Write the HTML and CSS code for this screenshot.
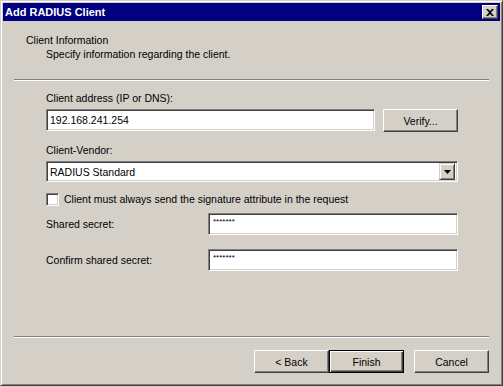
FILE: index.html
```html
<!DOCTYPE html>
<html lang="en">
  <head>
    <meta charset="UTF-8" />
    <title>Add RADIUS Client</title>
    <link rel="stylesheet" href="styles.css">
  </head>
  <body>
    <div class="window">
      <div class="titlebar">
        <span class="titlebar__text">Add RADIUS Client</span>
        <span class="titlebar__close">
          <svg width="8" height="7" viewBox="0 0 8 7">
            <path d="M0 0h2l2 2 2-2h2L5 3.5 8 7H6L4 5 2 7H0l3-3.5z" fill="#000"/>
          </svg>
        </span>
      </div>

      <div class="header">
        <div class="header__title">Client Information</div>
        <div class="header__sub">Specify information regarding the client.</div>
      </div>
      <div class="rule"></div>

      <div class="form">
        <div class="form__label">Client address (IP or DNS):</div>
        <div class="form__row">
          <div class="textbox textbox--grow">192.168.241.254</div>
          <div class="btn">Verify...</div>
        </div>

        <div class="form__label form__label--gap">Client-Vendor:</div>
        <div class="combo">
          <span class="combo__value">RADIUS Standard</span>
          <span class="combo__arrow">
            <svg width="7" height="4" viewBox="0 0 7 4"><path d="M0 0h7L3.5 4z" fill="#000"/></svg>
          </span>
        </div>

        <div class="check">
          <span class="check__box"></span>
          <span>Client must always send the signature attribute in the request</span>
        </div>

        <div class="secret">
          <span class="secret__label">Shared secret:</span>
          <div class="textbox textbox--secret">*******</div>
        </div>
        <div class="secret secret--second">
          <span class="secret__label">Confirm shared secret:</span>
          <div class="textbox textbox--secret">*******</div>
        </div>
      </div>

      <div class="rule"></div>
      <div class="buttons">
        <div class="btn">&lt; Back</div>
        <div class="btn btn--default">Finish</div>
        <div class="btn btn--cancel">Cancel</div>
      </div>
    </div>
  </body>
</html>
```

FILE: styles.css
```css
* {
  box-sizing: border-box;
}

body {
  margin: 0;
  background: #d4d0c8;
  font-family: 'Liberation Sans', Arial, sans-serif;
  font-size: 10.5px;
  line-height: 14px;
  color: #000;
}

.window {
  width: 503px;
  height: 386px;
  display: flex;
  flex-direction: column;
  padding: 2px;
  background: #d4d0c8;
  border: 1px solid;
  border-color: #d4d0c8 #404040 #404040 #d4d0c8;
  box-shadow: inset 1px 1px #fff, inset -1px -1px #808080;
}

.titlebar {
  height: 18px;
  display: flex;
  align-items: center;
  justify-content: space-between;
  padding: 0 2px 0 2px;
  background: #000080;
  color: #fff;
}

.titlebar__text {
  font-size: 11px;
  font-weight: bold;
}

.titlebar__close {
  width: 16px;
  height: 14px;
  display: flex;
  align-items: center;
  justify-content: center;
  background: #d4d0c8;
  border: 1px solid;
  border-color: #fff #404040 #404040 #fff;
  box-shadow: inset -1px -1px #808080;
}

.header {
  padding: 12px 0 0 23px;
}

.header__sub {
  padding-left: 20px;
}

.rule {
  height: 2px;
  margin: 18px 11px 0;
  border-top: 1px solid #808080;
  border-bottom: 1px solid #fff;
}

.form {
  flex: 1;
  padding: 10px 42px 0 43px;
}

.form__row {
  display: flex;
  gap: 8px;
  margin-top: 4px;
  align-items: flex-start;
}

.form__label--gap {
  margin-top: 11px;
}

.textbox {
  height: 22px;
  padding: 3px 3px 0;
  background: #fff;
  border: 1px solid;
  border-color: #808080 #fff #fff #808080;
  box-shadow: inset 1px 1px #404040, inset -1px -1px #d4d0c8;
}

.textbox--grow {
  flex: 1;
}

.textbox--secret {
  width: 250px;
  padding: 4px 4px 0;
  font-size: 8px;
  line-height: 8px;
}

.btn {
  width: 75px;
  height: 23px;
  display: flex;
  align-items: center;
  justify-content: center;
  background: #d4d0c8;
  border: 1px solid;
  border-color: #fff #404040 #404040 #fff;
  box-shadow: inset -1px -1px #808080;
}

.btn--default {
  border-color: #000;
  box-shadow: inset 1px 1px #fff, inset -1px -1px #404040, inset -2px -2px #808080;
}

.btn--cancel {
  margin-left: 10px;
}

.combo {
  height: 21px;
  margin-top: 4px;
  display: flex;
  align-items: center;
  justify-content: space-between;
  padding: 0 2px 0 3px;
  background: #fff;
  border: 1px solid;
  border-color: #808080 #fff #fff #808080;
  box-shadow: inset 1px 1px #404040, inset -1px -1px #d4d0c8;
}

.combo__arrow {
  width: 16px;
  height: 17px;
  display: flex;
  align-items: center;
  justify-content: center;
  background: #d4d0c8;
  border: 1px solid;
  border-color: #d4d0c8 #404040 #404040 #d4d0c8;
  box-shadow: inset 1px 1px #fff, inset -1px -1px #808080;
}

.check {
  display: flex;
  align-items: center;
  gap: 5px;
  margin-top: 10px;
}

.check__box {
  width: 13px;
  height: 13px;
  background: #fff;
  border: 1px solid;
  border-color: #808080 #fff #fff #808080;
  box-shadow: inset 1px 1px #404040, inset -1px -1px #d4d0c8;
}

.secret {
  display: flex;
  align-items: center;
  margin-top: 7px;
}

.secret--second {
  margin-top: 14px;
}

.secret__label {
  width: 162px;
}

.buttons {
  display: flex;
  justify-content: flex-end;
  padding: 12px 11px 10px 0;
}
```
